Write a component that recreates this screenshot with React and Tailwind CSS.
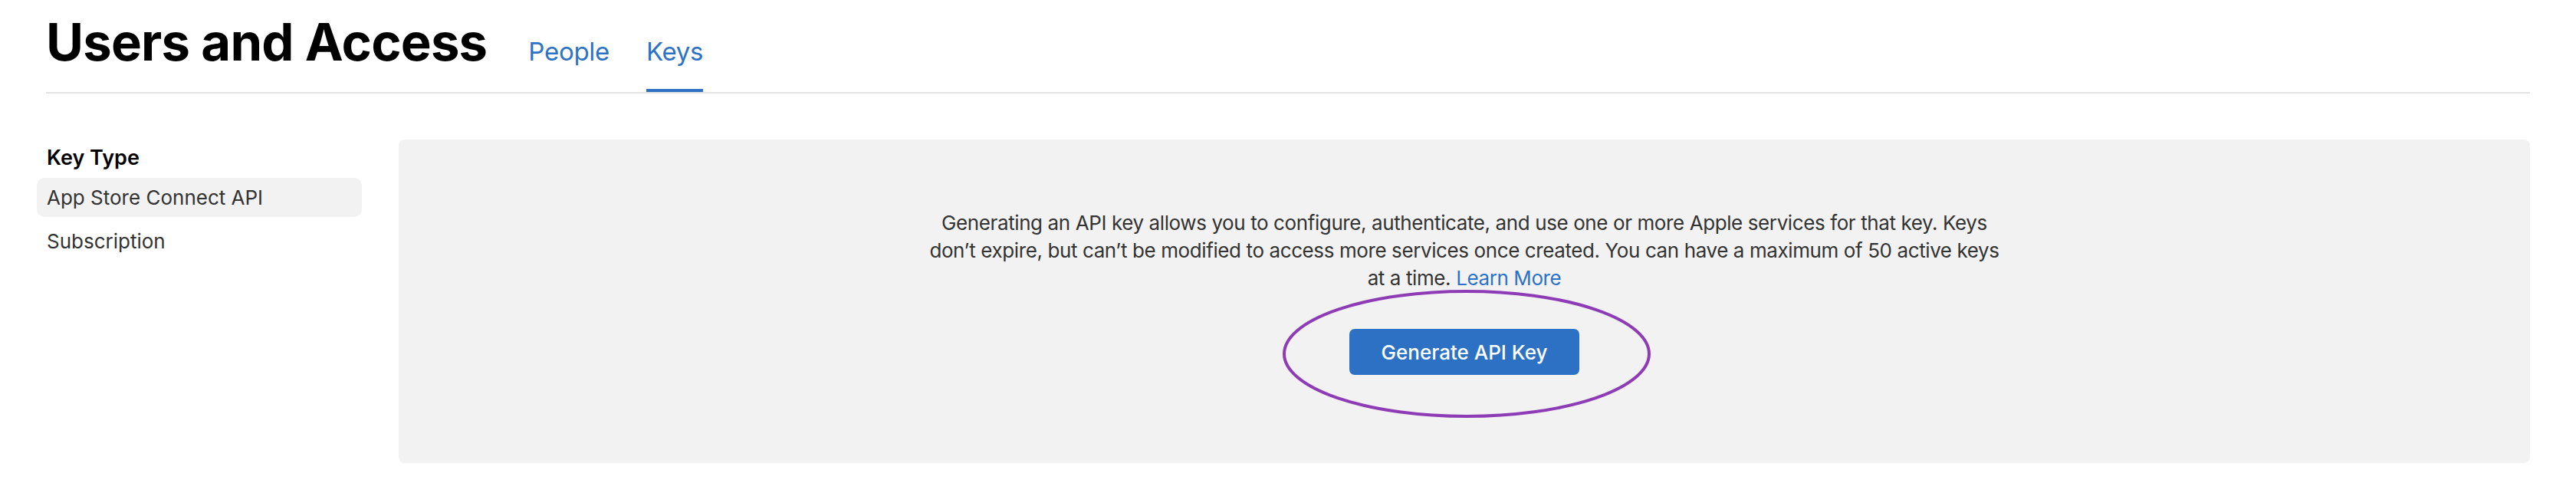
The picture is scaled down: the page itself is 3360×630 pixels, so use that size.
import React from 'react';

const tabs = [
  { label: 'People', active: false },
  { label: 'Keys', active: true },
];

const keyTypes = [
  { label: 'App Store Connect API', selected: true },
  { label: 'Subscription', selected: false },
];

const App = () => {
  return (
    <div className="w-[3360px] h-[630px] bg-white px-[60px] font-['Inter','Noto_Sans',sans-serif] overflow-hidden">
      {/* Header */}
      <div className="flex h-[122px] items-end border-b-2 border-[#e3e3e3]">
        <h1 className="mb-[32px] text-[67px] leading-none font-bold text-black tracking-[-0.8px]">Users and Access</h1>
        <div className="ml-[54px] flex gap-[48px]">
          {tabs.map(tab => (
            <div
              key={tab.label}
              className={`pb-[32px] text-[33px] leading-none tracking-[-0.3px] text-[#2d72c5] border-b-4 ${tab.active ? 'border-[#2d72c5]' : 'border-transparent'}`}
            >
              {tab.label}
            </div>
          ))}
        </div>
      </div>

      {/* Body */}
      <div className="flex items-start gap-[48px] pt-[60px]">
        <div className="-ml-[12px] w-[424px] shrink-0 pt-[10px]">
          <h2 className="pl-[13px] text-[27px] leading-none font-semibold text-black">Key Type</h2>
          <div className="mt-[13px] flex flex-col gap-[6px]">
            {keyTypes.map(item => (
              <div
                key={item.label}
                className={`flex h-[51px] items-center rounded-[10px] px-[13px] text-[26px] leading-none text-[#333333] ${item.selected ? 'bg-[#f2f2f2]' : ''}`}
              >
                {item.label}
              </div>
            ))}
          </div>
        </div>

        <div className="flex h-[422px] flex-1 flex-col items-center rounded-[8px] bg-[#f2f2f2] pt-[91px]">
          <p className="max-w-[1412px] text-center text-[26px] leading-[36px] tracking-[-0.4px] text-[#333333]">
            Generating an API key allows you to configure, authenticate, and use one or more Apple services for that key. Keys don’t expire, but can’t be modified to access more services once created. You can have a maximum of 50 active keys at a time.{' '}
            <span className="text-[#2d72c5]">Learn More</span>
          </p>
          <div className="relative mt-[48px]">
            <button className="h-[60px] w-[300px] rounded-[7px] bg-[#2c71c4] text-[26px] font-medium text-white">
              Generate API Key
            </button>
            <svg
              className="pointer-events-none absolute left-[-87px] top-[-51px]"
              width="480"
              height="167"
              viewBox="0 0 480 167"
            >
              <ellipse cx="240" cy="83.5" rx="238" ry="81.5" fill="none" stroke="#8e3cb5" strokeWidth="4" />
            </svg>
          </div>
        </div>
      </div>
    </div>
  );
};

export default App;
